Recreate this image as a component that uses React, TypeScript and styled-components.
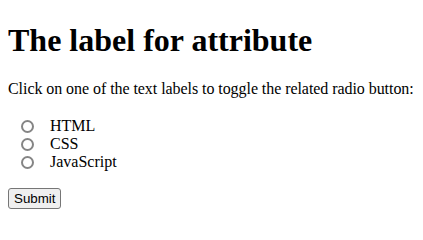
import styled, { createGlobalStyle } from 'styled-components'

const GlobalStyle = createGlobalStyle`
  body {
    margin: 8px;
    font-family: "Liberation Serif", "Times New Roman", serif;
    font-size: 16px;
    color: #000;
    background: #fff;
  }
`

const Heading = styled.h1`
  font-size: 32px;
  font-weight: 700;
  margin: 14px 0 21px;
`

const Intro = styled.p`
  margin: 16px 0 19px;
  white-space: nowrap;
  letter-spacing: -0.06px;
`

const Form = styled.form`
  margin: 0;
`

const OptionRow = styled.div`
  display: flex;
  align-items: center;
  height: 18px;
`

const Radio = styled.input`
  appearance: none;
  box-sizing: border-box;
  width: 13px;
  height: 13px;
  margin: 0 16px 0 13px;
  border: 2px solid #858585;
  border-radius: 50%;
  background: #fff;

  &:checked {
    border-color: #0075ff;
    background: radial-gradient(circle, #0075ff 0 2.5px, #fff 3px);
  }
`

const OptionLabel = styled.label`
  font-size: 16px;
`

const SubmitButton = styled.button`
  margin-top: 17px;
  font-family: Arial, "Liberation Sans", sans-serif;
  font-size: 13.33px;
  padding: 2px 5px;
  background: #efefef;
  border: 1px solid #767676;
  border-radius: 3px;
  color: #000;
`

const options = [
  { id: 'html', label: 'HTML' },
  { id: 'css', label: 'CSS' },
  { id: 'javascript', label: 'JavaScript' }
]

const App: React.FC = () => {
  return (
    <>
      <GlobalStyle />
      <Heading>The label for attribute</Heading>
      <Intro>Click on one of the text labels to toggle the related radio button:</Intro>
      <Form onSubmit={(e) => e.preventDefault()}>
        {options.map((o) => (
          <OptionRow key={o.id}>
            <Radio type="radio" id={o.id} name="fav_language" value={o.label} />
            <OptionLabel htmlFor={o.id}>{o.label}</OptionLabel>
          </OptionRow>
        ))}
        <SubmitButton type="submit">Submit</SubmitButton>
      </Form>
    </>
  )
}

export default App
